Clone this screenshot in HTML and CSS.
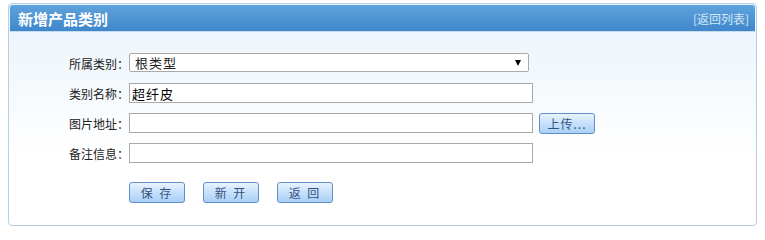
FILE: index.html
```html
<!DOCTYPE html>
<html lang="zh">
<head>
<meta charset="utf-8">
<title>新增产品类别</title>
<link rel="stylesheet" href="styles.css">
</head>
<body>
<div class="page">
  <div class="panel">
    <div class="panel-head">
      <span class="panel-title">新增产品类别</span>
      <a class="panel-link" href="#">[返回列表]</a>
    </div>
    <div class="panel-body">
      <form class="form">
        <div class="row">
          <label class="lbl">所属类别：</label>
          <div class="select"><span class="sel-text">根类型</span><span class="arrow"></span></div>
        </div>
        <div class="row">
          <label class="lbl">类别名称：</label>
          <input class="txt" type="text" value="超纤皮">
        </div>
        <div class="row">
          <label class="lbl">图片地址：</label>
          <input class="txt" type="text" value="">
          <button type="button" class="btn btn-up">上传...</button>
        </div>
        <div class="row">
          <label class="lbl">备注信息：</label>
          <input class="txt" type="text" value="">
        </div>
        <div class="actions">
          <button type="button" class="btn">保 存</button>
          <button type="button" class="btn">新 开</button>
          <button type="button" class="btn">返 回</button>
        </div>
      </form>
    </div>
  </div>
</div>
</body>
</html>
```
FILE: styles.css
```css
html, body {
  margin: 0;
  padding: 0;
  background: #ffffff;
  font-family: "Noto Sans CJK SC", "DejaVu Sans", sans-serif;
  font-size: 12px;
  color: #222;
}
.page {
  padding: 3px 8px 0 8px;
}
.panel {
  width: 747px;
  height: 221px;
  border: 1px solid #b4d0e6;
  border-radius: 4px;
  background: linear-gradient(to bottom, #e9f2fb 0px, #f6fafd 90px, #ffffff 150px);
  overflow: hidden;
}
.panel-head {
  height: 26px;
  margin: 1px 1px 0 1px;
  border-radius: 3px 3px 0 0;
  background: linear-gradient(to bottom, #5fa3dc, #3f87cc);
  border-bottom: 1px solid #c6dcee;
  display: flex;
  align-items: center;
  justify-content: space-between;
  padding: 0 6px 0 8px;
}
.panel-title {
  color: #ffffff;
  font-weight: bold;
  font-size: 15px;
  letter-spacing: 0;
}
.panel-link {
  color: #d6e7f6;
  font-size: 12px;
  text-decoration: none;
}
.panel-body {
  padding: 21px 0 0 0;
}
.form {
  display: flex;
  flex-direction: column;
  gap: 10px;
}
.row {
  display: flex;
  align-items: center;
  height: 20px;
}
.lbl {
  width: 120px;
  text-align: right;
  font-size: 12px;
  color: #222;
}
.select {
  align-self: flex-start;
  width: 400px;
  height: 19px;
  border: 1px solid #a9a9a9;
  border-radius: 2px;
  background: #fff;
  display: flex;
  align-items: center;
  justify-content: space-between;
  padding: 0 7px 0 5px;
  box-sizing: border-box;
  font-size: 13px;
}
.sel-text {
  letter-spacing: 1px;
}
.arrow {
  width: 0;
  height: 0;
  border-left: 3px solid transparent;
  border-right: 3px solid transparent;
  border-top: 6px solid #000;
}
.txt {
  width: 404px;
  height: 20px;
  box-sizing: border-box;
  border: 1px solid #a9a9a9;
  padding: 0 2px;
  margin: 0;
  font-family: "Noto Sans CJK SC", "DejaVu Sans", sans-serif;
  font-size: 13px;
  letter-spacing: 1px;
  color: #000;
  background: #fff;
  outline: none;
}
.btn {
  width: 56px;
  height: 21px;
  box-sizing: border-box;
  border: 1px solid #5f8fc6;
  border-radius: 3px;
  background: linear-gradient(to bottom, #eaf4fe 0%, #c9e2fb 45%, #a9d0f6 100%);
  color: #35527e;
  font-family: "Noto Sans CJK SC", "DejaVu Sans", sans-serif;
  font-size: 12px;
  letter-spacing: 2px;
  padding: 0;
  margin: 0;
  line-height: 19px;
}
.btn-up {
  margin-left: 6px;
  letter-spacing: 1px;
}
.actions {
  display: flex;
  gap: 18px;
  padding-left: 120px;
  margin-top: 9px;
}
```
